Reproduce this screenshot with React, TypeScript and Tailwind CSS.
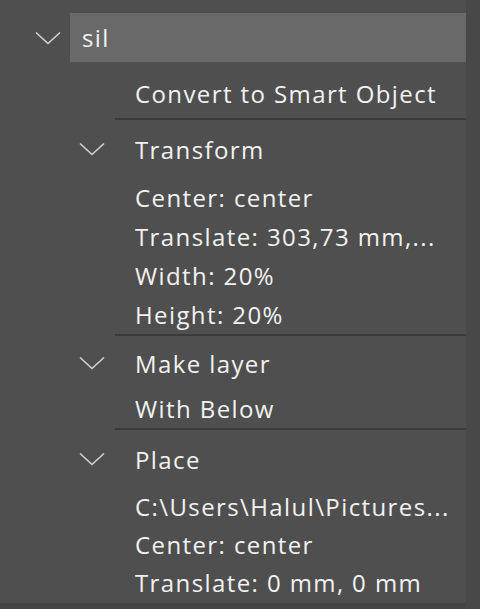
import React from 'react';

const Chevron: React.FC<{ className?: string }> = ({ className }) => (
    <svg width="26" height="14" viewBox="0 0 26 14" className={className} fill="none">
        <path d="M1 1.5 L13 12.5 L25 1.5" stroke="#d2d2d2" strokeWidth="1.6" />
    </svg>
);

interface Step {
    title: string;
    headH: string;
    rowH: string;
    params: string[];
}

const steps: Step[] = [
    {
        title: 'Transform',
        headH: 'h-[58px]',
        rowH: 'h-[39px]',
        params: ['Center: center', 'Translate: 303,73 mm,...', 'Width: 20%', 'Height: 20%'],
    },
    {
        title: 'Make layer',
        headH: 'h-[54px]',
        rowH: 'h-[38px]',
        params: ['With Below'],
    },
    {
        title: 'Place',
        headH: 'h-[58px]',
        rowH: 'h-[38px]',
        params: ['C:\\Users\\Halul\\Pictures...', 'Center: center', 'Translate: 0 mm, 0 mm'],
    },
];

const StepBlock: React.FC<{ step: Step; last?: boolean }> = ({ step, last }) => (
    <div className="flex flex-col shrink-0">
        <div className={`flex items-center shrink-0 ${step.headH}`}>
            <div className="w-[135px] flex pl-[79px]">
                <Chevron />
            </div>
            <span className="pt-[2px]">{step.title}</span>
        </div>
        {step.params.map((p, i) => (
            <div key={i} className={`${step.rowH} shrink-0 flex items-center pl-[135px] whitespace-nowrap`}>
                {p}
            </div>
        ))}
        {!last && <div className="ml-[115px] h-[2px] shrink-0 bg-[#3a3a3a]" />}
    </div>
);

export default function App() {
    return (
        <div
            className="w-[480px] h-[609px] bg-[#4f4f4f] flex text-[#f2f2f2] text-[24px] tracking-[1.4px] overflow-hidden"
            style={{ fontFamily: '"Open Sans", "Liberation Sans", sans-serif' }}
        >
            <div className="w-[466px] flex flex-col pt-[13px]">
                {/* Action row */}
                <div className="flex items-center h-[49px] shrink-0">
                    <div className="w-[70px] flex pl-[35px]">
                        <Chevron />
                    </div>
                    <div className="flex-1 h-full bg-[#696969] flex items-center pl-[12px]">sil</div>
                </div>

                {/* Convert step */}
                <div className="h-[48px] mt-[8px] shrink-0 flex items-center pl-[135px]">Convert to Smart Object</div>
                <div className="ml-[115px] h-[2px] shrink-0 bg-[#3a3a3a]" />

                {steps.map((s, i) => (
                    <StepBlock key={i} step={s} last={i === steps.length - 1} />
                ))}
                <div className="flex-1 min-h-0" />
                <div className="h-[6px] shrink-0 bg-[#444444]" />
            </div>
            <div className="flex-1 bg-[#484848]" />
        </div>
    );
}
